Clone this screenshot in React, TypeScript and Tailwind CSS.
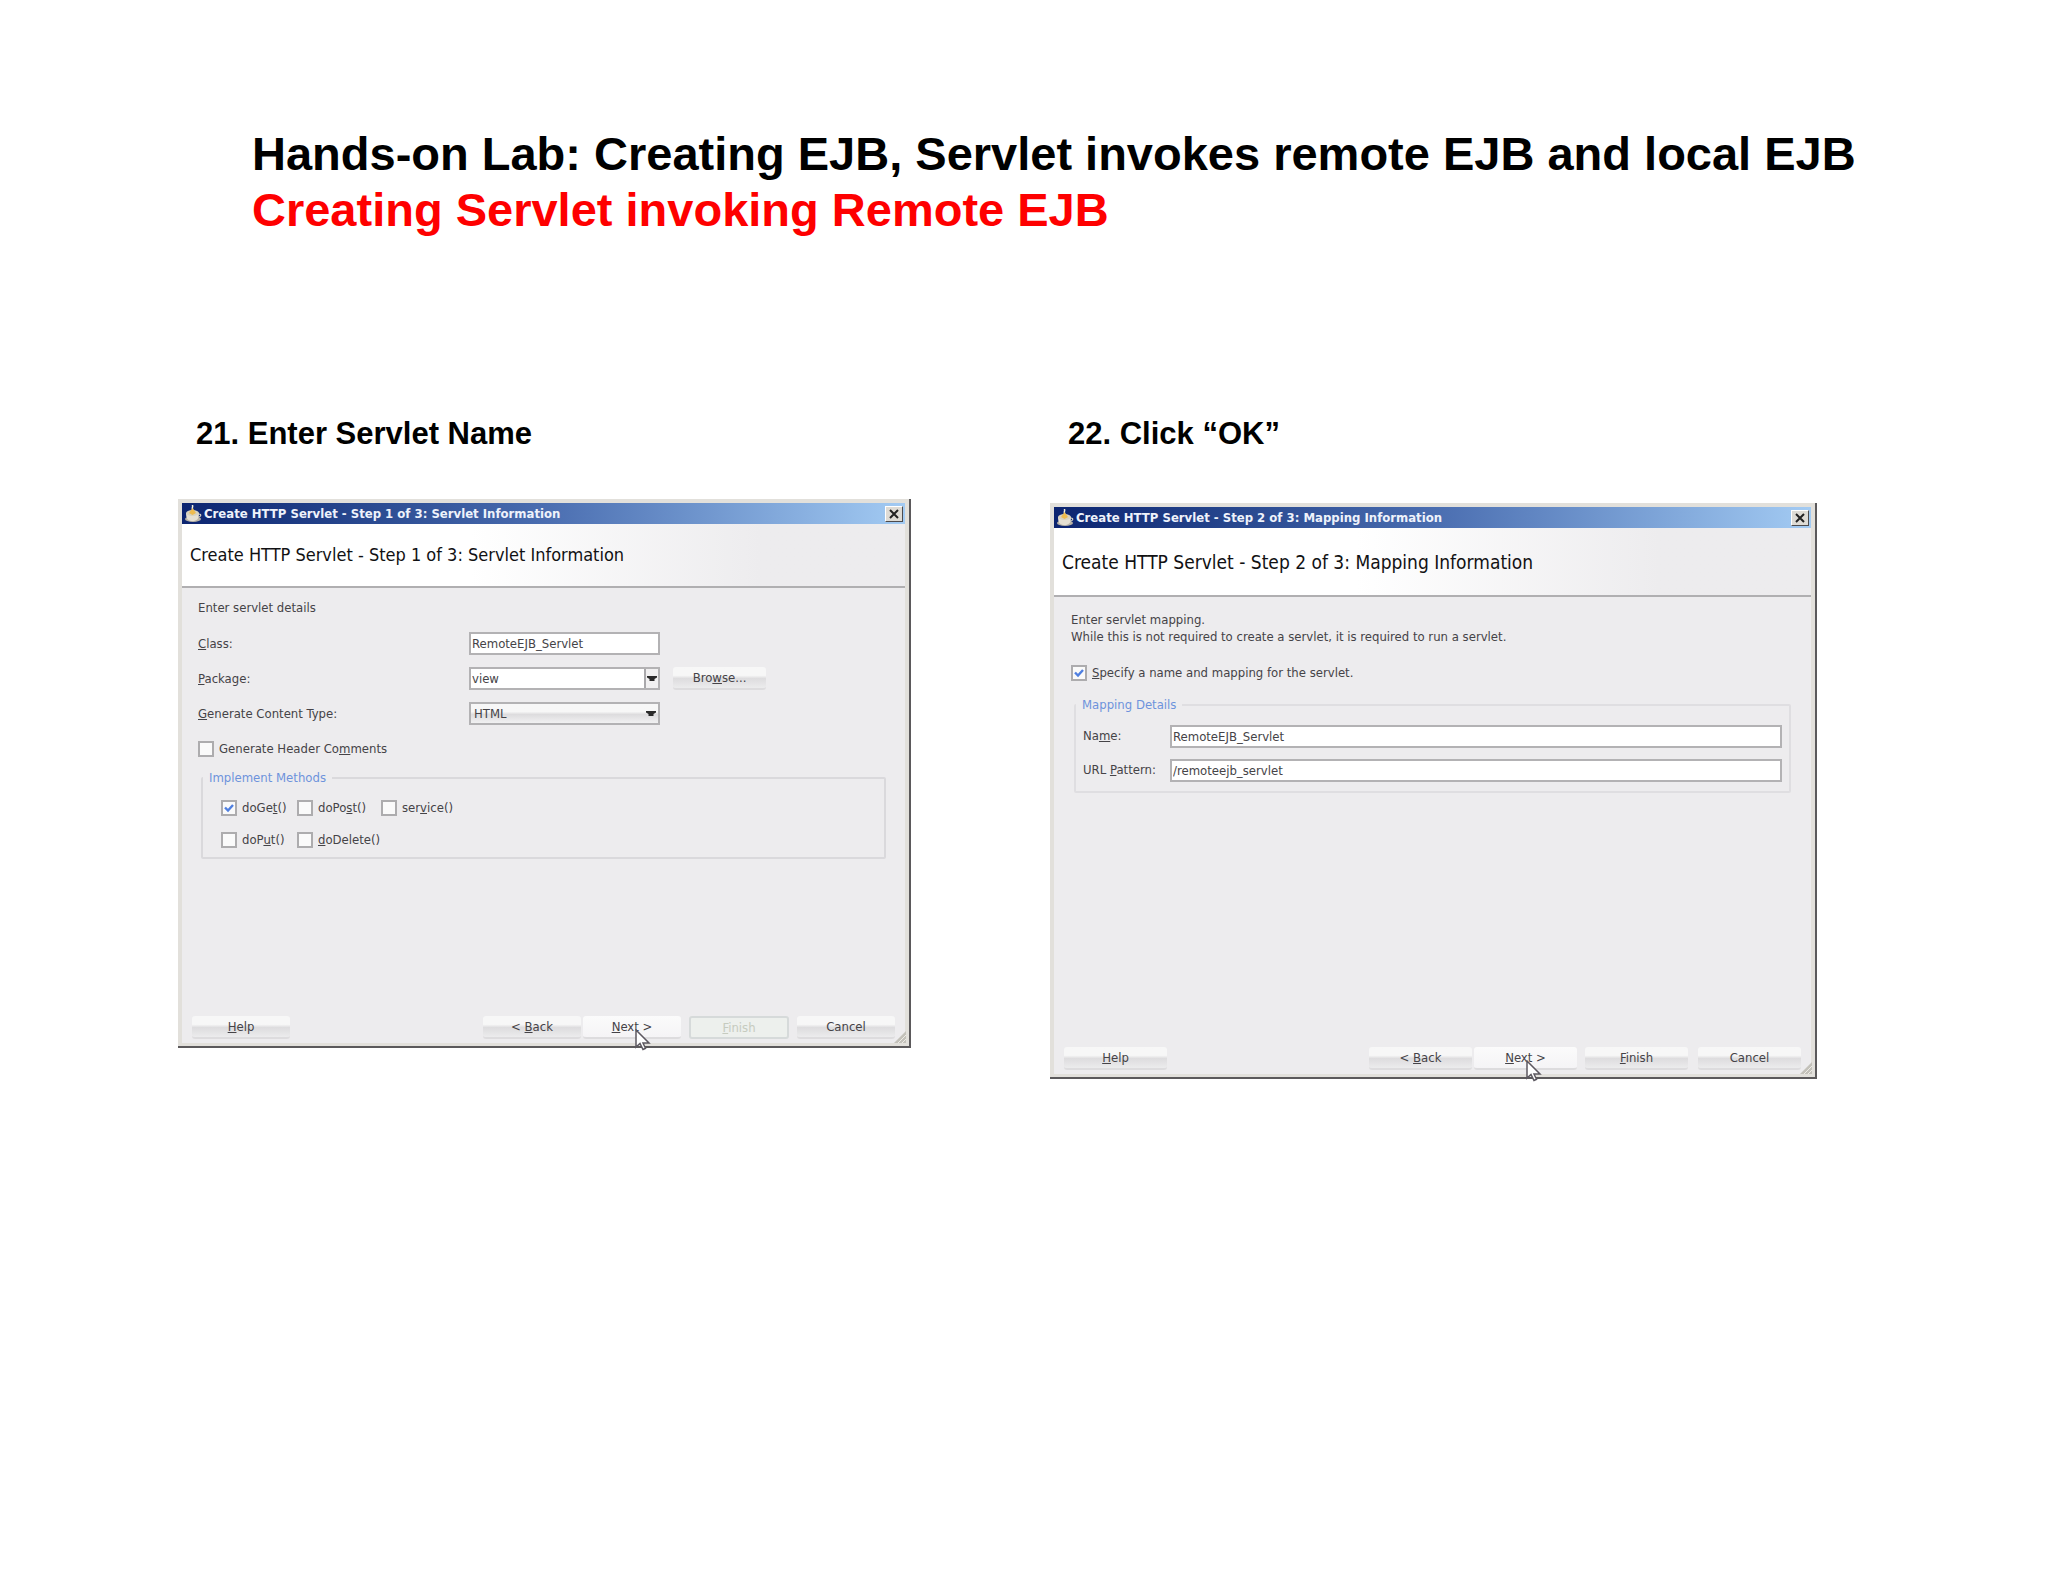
import { useId, type ReactNode } from 'react';
import clsx from 'clsx';

function CupIcon() {
  return (
    <svg viewBox="0 0 18 18" className="w-[18px] h-[18px] shrink-0" aria-hidden="true">
      <path d="M8 0c2 1-1 3 1 5" stroke="#f4f0dc" strokeWidth="1.5" fill="none" />
      <ellipse cx="9" cy="14" rx="8" ry="3" fill="#b9b3a6" />
      <path d="M2 8h13c0 6-2 8-6.500 8S2 14 2 8z" fill="#e6e0d2" />
      <ellipse cx="8.500" cy="8" rx="6.500" ry="3" fill="#d8d2be" />
      <path d="M5 8l3.500-5L12 8l-3.500 2z" fill="#eebb4e" />
      <path d="M15 9c2.500 0 2.500 3-1 3" stroke="#d9d2c0" strokeWidth="1.200" fill="none" />
    </svg>
  );
}

function Pointer() {
  return (
    <svg viewBox="0 0 16 22" className="absolute left-[52px] top-[13px] z-10 w-4 h-[22px] pointer-events-none" aria-hidden="true">
      <path d="M1 1v17l4-3.500 3 6 2.500-1.200-2.500-5.300h6z" fill="#fff" stroke="#5c5860" strokeWidth="1.500" />
    </svg>
  );
}

function Arrow({ boxed }: { boxed?: boolean }) {
  return (
    <span className={clsx('absolute right-[2px] top-[2px] bottom-[2px] w-[14px] flex items-center justify-center pointer-events-none', boxed && 'border-l-2 border-[#a9a8ab] bg-[#f1f0f1]')}>
      <svg viewBox="0 0 10 6" className="w-[10px] h-[6px]" aria-hidden="true">
        <path d="M0 0h10v1.500L7.500 3v2h-5V3L0 1.500z" fill="#2a2a2a" />
      </svg>
    </span>
  );
}

function Check({ children, checked }: { children: ReactNode; checked?: boolean }) {
  return (
    <label className="flex items-center gap-[5px] whitespace-nowrap">
      <span className="relative w-4 h-4 shrink-0">
        <input type="checkbox" defaultChecked={checked} className="peer appearance-none block w-4 h-4 bg-[#fafafa] border-2 border-[#adacae]" />
        <svg viewBox="0 0 16 16" className="hidden peer-checked:block absolute inset-0 w-4 h-4 pointer-events-none" aria-hidden="true">
          <path d="M4 7.500l3 3 5-5.500" stroke="#4f7fe0" strokeWidth="2.400" fill="none" />
        </svg>
      </span>
      <span>{children}</span>
    </label>
  );
}

function Button({ children, className, hot, disabled }: { children: ReactNode; className: string; hot?: boolean; disabled?: boolean }) {
  return (
    <span className={clsx('relative flex', className)}>
      <button
        type="button"
        disabled={disabled}
        className={clsx(
          'w-full h-[23px] flex items-center justify-center rounded-[3px]',
          disabled && 'border-2 border-[#d6dada] bg-[#edf0ed] text-[#c6cbbf]',
          !disabled && 'border-b-2 border-[#dddcde]',
          hot && 'bg-linear-to-b from-[#fbfbfb] to-[#f5f4f6]',
          !hot && !disabled && 'bg-linear-to-b from-[#f7f7f7] from-40% via-[#dddcde] via-55% to-[#ececed]',
        )}
      >
        <span>{children}</span>
      </button>
      {hot && <Pointer />}
    </span>
  );
}

function Dialog({ title, className, headerClass, children, footer }: { title: string; className: string; headerClass: string; children: ReactNode; footer: ReactNode }) {
  return (
    <div className={clsx('relative flex flex-col bg-[#e2e0db] border-r-2 border-b-2 border-[#5b595b] p-1 pb-[3px] text-[#454347] font-["DejaVu_Sans_Condensed","DejaVu_Sans",sans-serif] text-[13px] leading-4', className)}>
      <div className="flex items-center h-[21px] pl-[2px] pr-[2px] bg-linear-to-r from-[#0c2470] via-[#4a6db0] to-[#a3cbf3] text-[#eef2fb]">
        <CupIcon />
        <span className="pl-[2px] flex-1 font-bold whitespace-nowrap">{title}</span>
        <button type="button" aria-label="Close" className="w-[18px] h-4 bg-[#dedbd5] border border-t-white border-l-white border-b-[#4d4b4d] border-r-[#4d4b4d] flex items-center justify-center">
          <svg viewBox="0 0 10 10" className="w-[10px] h-[10px]" aria-hidden="true">
            <path d="M1 1l8 8M9 1l-8 8" stroke="#222" strokeWidth="2" />
          </svg>
        </button>
      </div>
      <div className={clsx('flex items-center pl-2 border-b-2 border-[#b0afb1] bg-linear-to-r from-white from-40% to-[#edecee] to-80% text-[#111113] whitespace-nowrap', headerClass)}>{title}</div>
      <div className="flex-1 flex flex-col bg-[#edecee]">
        {children}
        <div className="mt-auto flex px-[10px] pb-1">{footer}</div>
      </div>
      <svg viewBox="0 0 12 12" className="absolute right-[3px] bottom-[3px] w-3 h-3" aria-hidden="true">
        <path d="M12 0v12H0z" fill="#c3c1ba" />
        <path d="M4 12l8-8M8 12l4-4" stroke="#eeece6" />
      </svg>
    </div>
  );
}

const field = 'w-full h-[23px] bg-white border-2 border-[#b3b2b4] px-px appearance-none outline-none';
const legend = 'h-4 px-[6px] text-[#6d93dc]';

function ServletInformation() {
  const id = useId();
  return (
    <Dialog
      title="Create HTTP Servlet - Step 1 of 3: Servlet Information"
      className="min-h-[549px]"
      headerClass="h-16 text-[18px]"
      footer={
        <>
          <Button className="w-[98px] mr-auto"><u>H</u>elp</Button>
          <Button className="w-[98px] mr-[2px]">&lt; <u>B</u>ack</Button>
          <Button className="w-[98px] mr-2" hot><u>N</u>ext &gt;</Button>
          <Button className="w-[100px] mr-2" disabled><u>F</u>inish</Button>
          <Button className="w-[98px]">Cancel</Button>
        </>
      }
    >
      <div className="px-4 pt-[10px]">
        <p className="leading-5 mb-2">Enter servlet details</p>
        <div className="grid grid-cols-[271px_191px_93px] auto-rows-[35px] items-center">
          <label htmlFor={id + 'class'}><u>C</u>lass:</label>
          <input id={id + 'class'} defaultValue="RemoteEJB_Servlet" className={field} />
          <span />
          <label htmlFor={id + 'package'}><u>P</u>ackage:</label>
          <span className="relative">
            <select id={id + 'package'} className={clsx(field, 'block')}>
              <option>view</option>
            </select>
            <Arrow boxed />
          </span>
          <Button className="w-[93px] ml-[13px]">Bro<u>w</u>se...</Button>
          <label htmlFor={id + 'type'}><u>G</u>enerate Content Type:</label>
          <span className="relative">
            <select id={id + 'type'} className="block w-full h-[23px] pl-[3px] appearance-none outline-none border-2 border-[#b3b2b4] bg-linear-to-b from-[#f7f7f7] from-40% via-[#dddcde] via-55% to-[#f1f1f2]">
              <option>HTML</option>
            </select>
            <Arrow />
          </span>
          <span />
          <Check>Generate Header Co<u>m</u>ments</Check>
        </div>
        <fieldset className="mt-1 mx-[3px] border-2 border-[#dad9dc] rounded-[2px]">
          <legend className={legend}>Implement Methods</legend>
          <div className="grid grid-cols-[76px_84px_auto] auto-rows-[32px] pt-[6px] pb-px pl-[18px]">
            <Check checked>doGe<u>t</u>()</Check>
            <Check>doPo<u>s</u>t()</Check>
            <Check>ser<u>v</u>ice()</Check>
            <Check>doP<u>u</u>t()</Check>
            <Check><u>d</u>oDelete()</Check>
          </div>
        </fieldset>
      </div>
    </Dialog>
  );
}

function MappingInformation() {
  const id = useId();
  return (
    <Dialog
      title="Create HTTP Servlet - Step 2 of 3: Mapping Information"
      className="min-h-[576px]"
      headerClass="h-[69px] text-[19px]"
      footer={
        <>
          <Button className="w-[103px] mr-auto"><u>H</u>elp</Button>
          <Button className="w-[103px] mr-[2px]">&lt; <u>B</u>ack</Button>
          <Button className="w-[103px] mr-2" hot><u>N</u>ext &gt;</Button>
          <Button className="w-[103px] mr-[10px]"><u>F</u>inish</Button>
          <Button className="w-[103px]">Cancel</Button>
        </>
      }
    >
      <div className="px-[17px] pt-[14px]">
        <p className="leading-[17px]">
          Enter servlet mapping.
          <br />
          While this is not required to create a servlet, it is required to run a servlet.
        </p>
        <div className="mt-5">
          <Check checked><u>S</u>pecify a name and mapping for the servlet.</Check>
        </div>
        <fieldset className="mt-4 mx-[3px] border-2 border-[#dfdee1] rounded-[2px]">
          <legend className={legend}>Mapping Details</legend>
          <div className="grid grid-cols-[87px_1fr] auto-rows-[34px] items-center pt-[6px] pb-1 px-[7px]">
            <label htmlFor={id + 'name'}>Na<u>m</u>e:</label>
            <input id={id + 'name'} defaultValue="RemoteEJB_Servlet" className={field} />
            <label htmlFor={id + 'url'}>URL <u>P</u>attern:</label>
            <input id={id + 'url'} defaultValue="/remoteejb_servlet" className={field} />
          </div>
        </fieldset>
      </div>
    </Dialog>
  );
}

export default function App() {
  return (
    <div className="min-h-screen bg-white text-black font-['Liberation_Sans',Arial,sans-serif]">
      <header className="pt-[126px] pl-[252px] text-[47px] leading-[56px] font-bold">
        <h1>Hands-on Lab: Creating EJB, Servlet invokes remote EJB and local EJB</h1>
        <h2 className="text-[#fe0000]">Creating Servlet invoking Remote EJB</h2>
      </header>
      <main className="mt-44 pl-[178px] pr-[231px] grid grid-cols-[733fr_767fr] gap-x-[139px] items-start">
        <section>
          <h3 className="pl-[18px] mb-[45px] text-[31px] leading-10 font-bold">21. Enter Servlet Name</h3>
          <ServletInformation />
        </section>
        <section>
          <h3 className="pl-[18px] mb-[49px] text-[31px] leading-10 font-bold">22. Click “OK”</h3>
          <MappingInformation />
        </section>
      </main>
    </div>
  );
}
